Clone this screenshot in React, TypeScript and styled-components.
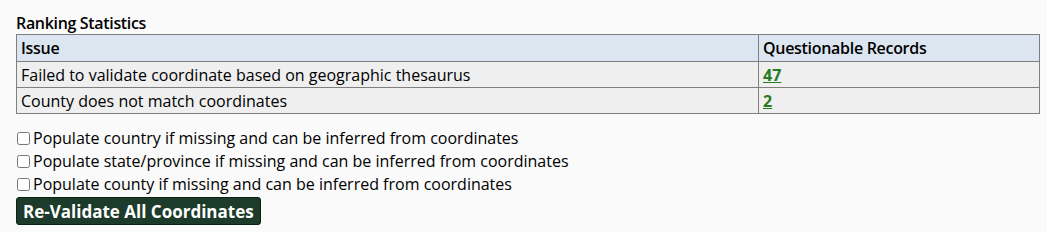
import React from 'react';
import styled, { createGlobalStyle } from 'styled-components';

const GlobalStyle = createGlobalStyle`
  body {
    margin: 0;
    background: #fafafa;
    font-family: 'Open Sans', 'DejaVu Sans', sans-serif;
    color: #000;
  }
`;

const Page = styled.div`
  padding: 12px 8px 0 16px;
`;

const Title = styled.div`
  font-size: 16px;
  font-weight: 600;
  letter-spacing: -0.33px;
  line-height: 22px;
`;

const Table = styled.table`
  width: 1024px;
  border-collapse: collapse;
  border: 1px solid #7f7f7f;
  font-size: 16px;
`;

const HeadCell = styled.th`
  background: #dce6f1;
  border: 1px solid #7f7f7f;
  text-align: left;
  font-weight: 600;
  letter-spacing: -0.3px;
  height: 26px;
  padding: 0 4px;
`;

const Cell = styled.td`
  background: #efefef;
  border: 1px solid #7f7f7f;
  height: 25px;
  padding: 0 4px;
`;

const CountLink = styled.a`
  color: #2a7a1f;
  font-weight: 700;
  text-decoration: underline;
`;

const Options = styled.div`
  margin-top: 13px;
  display: flex;
  flex-direction: column;
`;

const OptionRow = styled.label`
  display: flex;
  align-items: center;
  font-size: 16px;
  line-height: 23px;

  input {
    margin: 0 3px 0 1px;
    width: 13px;
    height: 13px;
  }
`;

const Button = styled.button`
  margin-top: 1px;
  background: #1c3b2b;
  color: #fff;
  border: 1px solid #0d1f16;
  border-radius: 3px;
  font-family: 'Open Sans', 'DejaVu Sans', sans-serif;
  font-weight: 700;
  font-size: 17px;
  padding: 0 6px;
  height: 28px;
  cursor: pointer;
`;

const issues = [
  { label: 'Failed to validate coordinate based on geographic thesaurus', count: 47 },
  { label: 'County does not match coordinates', count: 2 },
];

const options = [
  'Populate country if missing and can be inferred from coordinates',
  'Populate state/province if missing and can be inferred from coordinates',
  'Populate county if missing and can be inferred from coordinates',
];

export default function App() {
  return (
    <Page>
      <GlobalStyle />
      <Title>Ranking Statistics</Title>
      <Table>
        <thead>
          <tr>
            <HeadCell style={{ width: 733 }}>Issue</HeadCell>
            <HeadCell>Questionable Records</HeadCell>
          </tr>
        </thead>
        <tbody>
          {issues.map((i) => (
            <tr key={i.label}>
              <Cell>{i.label}</Cell>
              <Cell>
                <CountLink href="#">{i.count}</CountLink>
              </Cell>
            </tr>
          ))}
        </tbody>
      </Table>
      <Options>
        {options.map((o) => (
          <OptionRow key={o}>
            <input type="checkbox" />
            {o}
          </OptionRow>
        ))}
      </Options>
      <Button>Re-Validate All Coordinates</Button>
    </Page>
  );
}
